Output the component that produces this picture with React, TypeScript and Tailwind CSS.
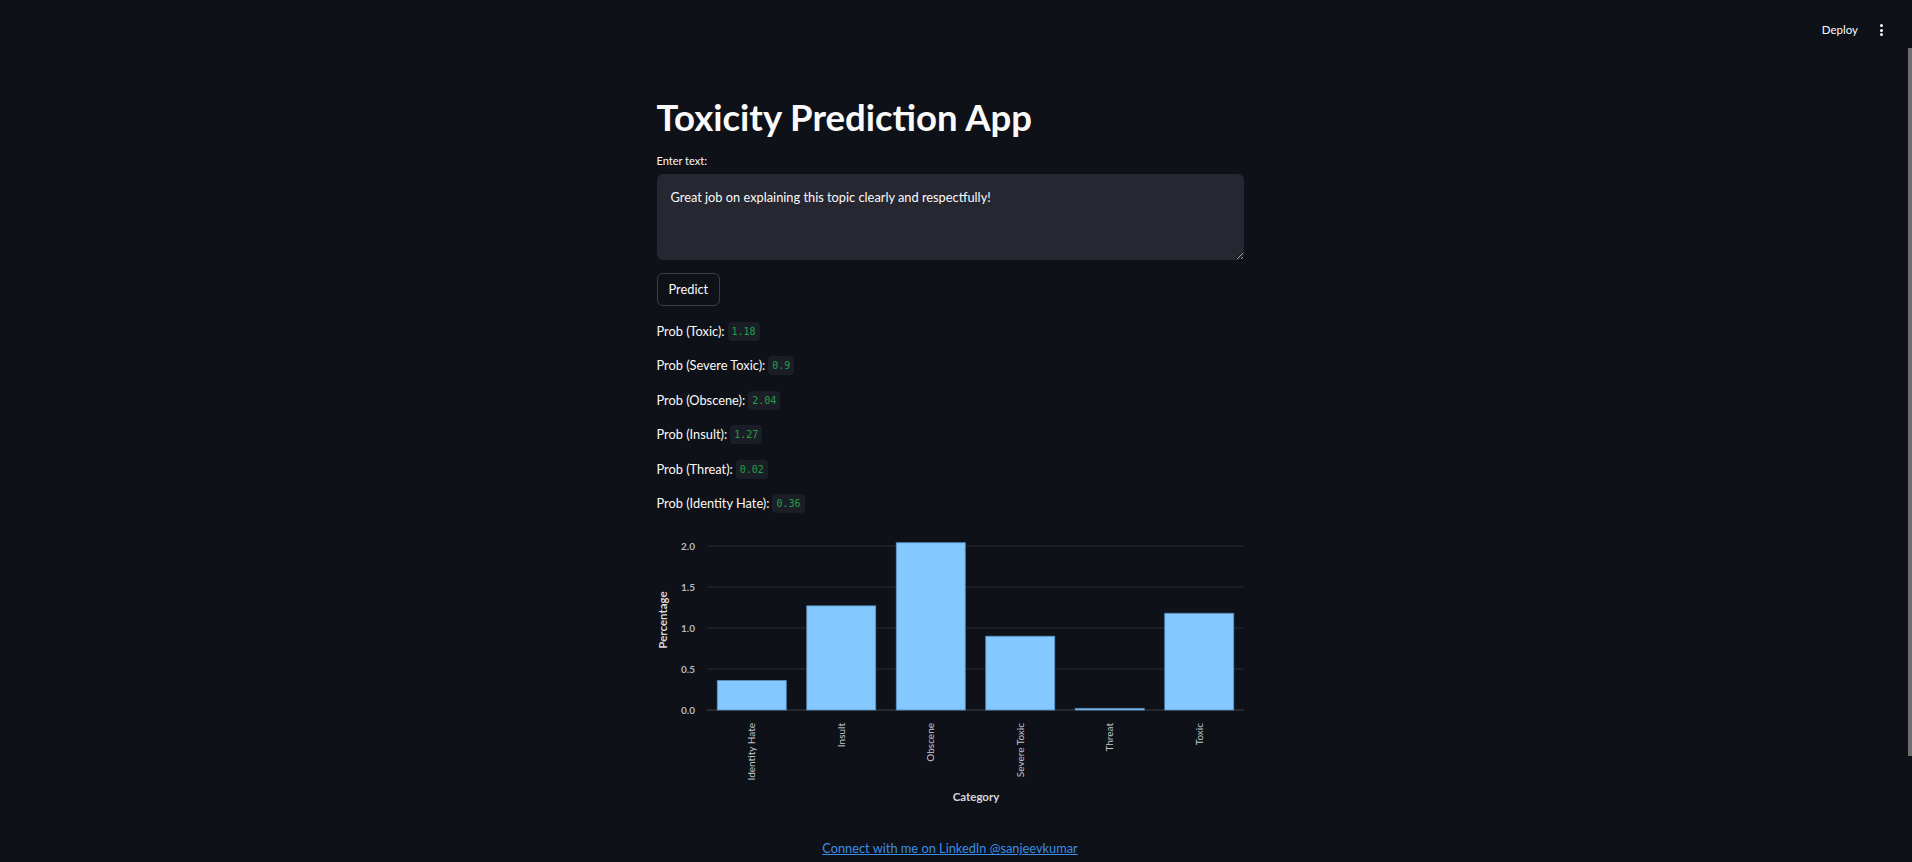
import React from 'react';

type Prob = { label: string; value: string };

const probs: Prob[] = [
  { label: 'Toxic', value: '1.18' },
  { label: 'Severe Toxic', value: '0.9' },
  { label: 'Obscene', value: '2.04' },
  { label: 'Insult', value: '1.27' },
  { label: 'Threat', value: '0.02' },
  { label: 'Identity Hate', value: '0.36' },
];

const bars = [
  { name: 'Identity Hate', v: 0.36 },
  { name: 'Insult', v: 1.27 },
  { name: 'Obscene', v: 2.04 },
  { name: 'Severe Toxic', v: 0.9 },
  { name: 'Threat', v: 0.02 },
  { name: 'Toxic', v: 1.18 },
];

const sans = "font-['Lato','Liberation_Sans',sans-serif]";

// vega-lite style bar chart, drawn by hand
function ProbChart() {
  const left = 50;
  const band = 89.5;
  const base = 189;
  const unit = 82;
  const ticks = [0, 0.5, 1, 1.5, 2];

  return (
    <svg width="587" height="294" className="block">
      {ticks.map((t) => (
        <g key={t}>
          <line x1={left} x2={587} y1={base - t * unit} y2={base - t * unit} stroke={t === 0 ? '#3d404a' : '#2a2d36'} strokeWidth="1" />
          <text x="38" y={base - t * unit + 3.5} textAnchor="end" fontSize="10" fill="#b4b8c2" fontFamily="Lato, sans-serif" fontWeight="700">
            {t.toFixed(1)}
          </text>
        </g>
      ))}
      {bars.map((b, i) => {
        const h = b.v * unit;
        const x = left + i * band + 10.25;
        const cx = left + i * band + band / 2;
        return (
          <g key={b.name}>
            <rect x={x} y={base - h} width="69" height={h} fill="#83c9ff" stroke="#5a8fc0" strokeWidth="0.8" />
            <text
              transform={`translate(${cx + 3.5},202) rotate(-90)`}
              textAnchor="end"
              fontSize="10"
              fill="#c4c7cf"
              fontFamily="Lato, sans-serif"
            >
              {b.name}
            </text>
          </g>
        );
      })}
      <text transform="translate(10,99) rotate(-90)" textAnchor="middle" fontSize="11.5" fill="#d5d7dd" fontFamily="Lato, sans-serif" fontWeight="700">
        Percentage
      </text>
      <text x="319" y="280" textAnchor="middle" fontSize="11.5" fill="#d5d7dd" fontFamily="Lato, sans-serif" fontWeight="700">
        Category
      </text>
    </svg>
  );
}

export default function App() {
  return (
    <div className={`h-[862px] overflow-hidden bg-[#0e1117] text-[#fafafa] flex ${sans}`}>
      <div className="flex-1 flex flex-col">
        <header className="h-[60px] flex items-center justify-end pr-[17px]">
          <span className="text-[11.5px] mr-[22px]">Deploy</span>
          <div className="flex flex-col gap-[1.5px] items-center">
            <span className="w-[3px] h-[3px] rounded-full bg-[#fafafa]" />
            <span className="w-[3px] h-[3px] rounded-full bg-[#fafafa]" />
            <span className="w-[3px] h-[3px] rounded-full bg-[#fafafa]" />
          </div>
        </header>

        <main className="flex justify-center">
          <div className="w-[587px] flex flex-col">
            <h1 className="mt-[29px] h-[56px] flex items-center text-[36.5px] font-bold leading-none">
              Toxicity Prediction App
            </h1>

            <label className="mt-[3px] h-[26px] flex items-center text-[11px]">Enter text:</label>

            <textarea
              className="h-[86px] w-full rounded-md bg-[#262730] px-[14px] py-[13px] text-[12.8px] leading-[1.6] text-[#fafafa] outline-none"
              defaultValue="Great job on explaining this topic clearly and respectfully!"
            />

            <div className="mt-[13px]">
              <button className="h-[33px] px-[11px] rounded-md border border-[#3a3d46] bg-[#0e1117] text-[12.8px]">
                Predict
              </button>
            </div>

            <div className="mt-[8px] flex flex-col">
              {probs.map((p) => (
                <div key={p.label} className="h-[34.5px] flex items-center text-[12.8px]">
                  <span>Prob ({p.label}):</span>
                  <code className="ml-[3px] px-[4px] py-[2px] rounded bg-[#1b1e26] text-[10px] text-[#21a046] font-['DejaVu_Sans_Mono',monospace]">
                    {p.value}
                  </code>
                </div>
              ))}
            </div>

            <ProbChart />

            <div className="mt-[24px] h-[20px] flex items-center justify-center">
              <a href="#" className="text-[12.8px] text-[#3a8ee6] underline">
                Connect with me on LinkedIn @sanjeevkumar
              </a>
            </div>
          </div>
        </main>
      </div>
      <div className="w-[12px] flex justify-end">
        <div className="mt-[48px] h-[708px] w-[4px] bg-[#6e6e6e]" />
      </div>
    </div>
  );
}
